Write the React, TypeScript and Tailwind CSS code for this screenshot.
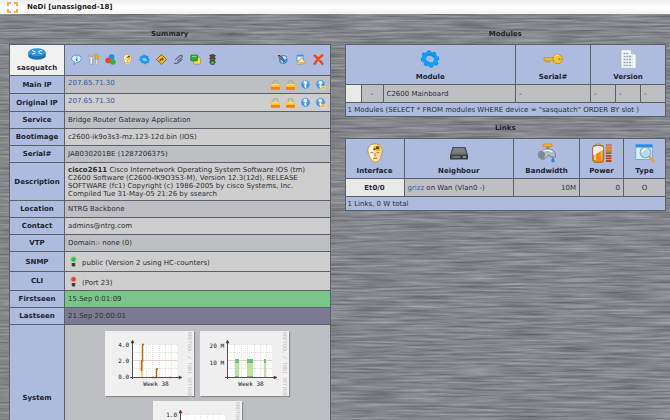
import type { ReactNode } from "react";

type IconProps = { className?: string };
const small = "block size-[11px]";
const large = "mx-auto block size-5";

/* ---------- small tool icons, 16 x 16 grid ---------- */

const Bubble = () => (
  <svg viewBox="0 0 16 16" className={small}>
    <path d="M8 1.500c4 0 7 2.300 7 5.300s-3 5.300-6.500 5.300L4.500 15.500l.6-4C2.500 10.700 1 9 1 6.800 1 3.800 4 1.500 8 1.500z" fill="#dff1ff" stroke="#4a8fd6" strokeWidth="1.400" />
    <path d="M7.500 3.500h1.800v1.500H7.500zM7 6h2.300v4.500H7z" fill="#3a86d8" />
  </svg>
);
const Tools = () => (
  <svg viewBox="0 0 16 16" className={small}>
    <path d="M1 1v4l2 2v8h3.500V7l2-2V1L6.500 2.500v2H3v-2z" fill="#f2f2ee" stroke="#858b91" strokeWidth=".9" />
    <path d="M10.500 1h4.500v7h-4.500z" fill="#f4b41c" stroke="#c88310" strokeWidth=".7" />
    <path d="M11.700 8h2.200v7h-2.200z" fill="#f7f4e8" stroke="#8f8f8f" strokeWidth=".6" />
  </svg>
);
const Balls = () => (
  <svg viewBox="0 0 16 16" className={small}>
    <circle cx="9.500" cy="4.800" r="4.300" fill="#2a8fe0" />
    <circle cx="4.800" cy="9.300" r="4.200" fill="#e34b2a" />
    <circle cx="11.500" cy="11.500" r="4" fill="#2fb53c" />
  </svg>
);
const Face = ({ className = small }: IconProps) => (
  <svg viewBox="0 0 20 20" className={className}>
    <path d="M10 .8c4.500 0 7.300 3 7.300 7 0 2-.8 3.500-1.200 5.200C15.500 16.500 13 19.200 10.500 19.200S5.500 16.800 4.300 13C3.400 11 2.700 9.500 2.700 7.600 2.700 3.800 5.500.8 10 .8z" fill="#f7dfa2" stroke="#b98a3c" strokeWidth=".8" />
    <path d="M9 2C6 2 4 4.500 4 7.500c0 2.500 2 7 4 9z" fill="#fff8e2" />
    <path d="M8.500 3.500h3l1-1.500 3 2v3l-3 1.500-2-1.500-2 .5z" fill="#efad1a" />
    <path d="M11 3.500h3v2.500h-3zM8.500 5.500h2V7h-2z" fill="#5b421b" />
    <path d="M5.500 9.700h3M11.500 9.700h3M8 15.300h4.300M10 10v3h1.300" fill="none" stroke="#ae8035" strokeWidth="1" />
  </svg>
);
const Cog = ({ className = small }: IconProps) => (
  <svg viewBox="0 0 20 20" className={className}>
    <g transform="rotate(25 10 10)">
      <ellipse cx="10" cy="10" rx="8" ry="6.800" fill="none" stroke="#1585dc" strokeWidth="3" strokeDasharray="3.200 2.600" />
      <ellipse cx="10" cy="10" rx="6.200" ry="5.200" fill="none" stroke="#14a0f8" strokeWidth="4.400" />
      <path d="M5.500 8.500a5.500 4.500 0 0 1 8-2.500" fill="none" stroke="#1670bd" strokeWidth=".8" />
    </g>
  </svg>
);
const Sign = () => (
  <svg viewBox="0 0 16 16" className={small}>
    <path d="M8 .8 15.200 8 8 15.200.8 8z" fill="#f8bf22" stroke="#6f5518" strokeWidth="1.200" />
    <path d="M6 11V7.500h4M8.500 5.500l2.300 2-2.300 2" fill="none" stroke="#43310c" strokeWidth="1.300" />
  </svg>
);
const Clip = () => (
  <svg viewBox="0 0 16 16" className={small}>
    <path d="M3 9 10 2.500c2-1.500 4.500.5 3 2.500L6.500 10.500M1.500 13c2 1.500 5 .5 7-1l5-4.500" fill="none" stroke="#59677d" strokeWidth="1.700" />
    <path d="M3 10.500 10.500 4" stroke="#a5b2c6" strokeWidth="1.200" />
  </svg>
);
const Layers = () => (
  <svg viewBox="0 0 16 16" className={small}>
    <rect x="5.500" y="5" width="9.700" height="9.700" rx="1.500" fill="#ffdf55" stroke="#a98b15" />
    <rect x="1" y="1.500" width="10" height="8.500" rx="1.500" fill="#34a83b" stroke="#187a24" />
    <path d="M3 3.500h6" stroke="#8fdd83" strokeWidth="1.500" />
  </svg>
);
const TrafficLight = () => (
  <svg viewBox="0 0 16 16" className={small}>
    <path d="M3 2.500h10M3 7h10M3 11.500h10" stroke="#4c4943" strokeWidth="1.500" />
    <rect x="4.700" y=".5" width="6.600" height="15" rx="1.500" fill="#3d3b38" />
    <circle cx="8" cy="3.300" r="1.700" fill="#8f392a" />
    <circle cx="8" cy="7.700" r="1.700" fill="#83702b" />
    <circle cx="8" cy="12.500" r="2.300" fill="#29cf36" />
  </svg>
);
const GlobeEdit = () => (
  <svg viewBox="0 0 16 16" className={small}>
    <circle cx="9" cy="8" r="6.500" fill="#3f92dc" />
    <path d="M8 3c3-1 5 1 6 3l-3 2zM5 9l4 1-1 3.500z" fill="#d5ecfc" />
    <path d="M1 1.500h3L10.500 9l.5 2.500-2.500-1L2 4z" fill="#4e432d" />
    <path d="M3 3.200 9 9.500" stroke="#efb23f" strokeWidth="1.200" />
  </svg>
);
const Broom = () => (
  <svg viewBox="0 0 16 16" className={small}>
    <path d="M3 1.500h9v9H3z" fill="#e8f4ff" stroke="#3d86cf" />
    <path d="M3 1.500h9v2.200H3z" fill="#3f92dc" />
    <path d="m9.500 5 5.500 7c-1 3-9.500 4-13 2z" fill="#f8e6a5" stroke="#a27a33" strokeWidth=".8" />
    <path d="M5 13h9" stroke="#d99b27" strokeWidth="1.500" />
  </svg>
);
const Cross = () => (
  <svg viewBox="0 0 16 16" className={small}>
    <path d="M2.500 2.500C6 5 10.500 9.500 13.500 14M13.500 2C9 5 5 9.500 2.500 14" fill="none" stroke="#e64a1b" strokeWidth="3.500" strokeLinecap="round" />
  </svg>
);
const Lock = () => (
  <svg viewBox="0 0 16 16" className={small}>
    <path d="M4.500 8V5.500c0-4 7-4 7 0V8" fill="none" stroke="#a7a7a3" strokeWidth="1.900" />
    <rect x="1.500" y="7" width="13" height="8.500" rx="1" fill="#f9c529" />
    <path d="M1.500 11.500h13v3a1 1 0 0 1-1 1h-11a1 1 0 0 1-1-1z" fill="#ee8119" />
    <path d="M3 8.500h10" stroke="#fff0a0" strokeWidth="1.200" />
  </svg>
);
const Globe = ({ badge = false }: { badge?: boolean }) => (
  <svg viewBox="0 0 16 16" className={small}>
    <circle cx="8" cy="8" r="6.800" fill="#4a93dd" stroke="#b3d4f0" strokeWidth="1" />
    <path d="M6 2.500 9.500 3 11 6 9 8l.5 4-2 1.500L6 10l1-2.500L4.500 6z" fill="#e2f3ff" />
    {badge && <path d="M8.500 10.500h7v4.500h-7z" fill="#f6b92d" stroke="#fff3cd" strokeWidth=".8" />}
  </svg>
);
const Bulb = ({ on }: { on: boolean }) => (
  <svg viewBox="0 0 16 16" className={small}>
    <circle cx="8" cy="5.500" r="5" fill="#dedede" stroke="#a7a7a7" strokeWidth=".7" />
    <circle cx="8" cy="5" r="3.500" className={on ? "fill-[#20c239]" : "fill-[#e2481f]"} />
    <path d="M5.500 10h5v4.500L8 15.800l-2.500-1.300z" fill="#3e3e3b" />
  </svg>
);

/* ---------- column icons ---------- */

const Key = () => (
  <svg viewBox="0 0 20 20" className={large}>
    <path d="M1 8.700h11v2.600H6.500V13H5v-1.700H4V13H2.500v-1.700H1z" fill="#f5c02b" stroke="#b47c12" strokeWidth=".6" />
    <ellipse cx="14.700" cy="10" rx="4.600" ry="4.700" fill="#fac823" stroke="#c18614" strokeWidth=".8" />
    <circle cx="16.500" cy="10" r="1.200" fill="#8296bf" />
    <path d="M11.500 8c1-2 3-2.300 4.500-1.800" fill="none" stroke="#fff0a3" />
  </svg>
);
const Sheet = () => (
  <svg viewBox="0 0 20 20" className={large}>
    <path d="M3 .8h10.500L18 5v14.300H3z" fill="#f6fafd" stroke="#a5b7c5" strokeWidth=".8" />
    <path d="M13.500.8V5H18z" fill="#c4d4e0" stroke="#8fa3b3" strokeWidth=".5" />
    <path d="M5.500 4.500h5M5.500 7.500h9M5.500 10.500h9M5.500 13.500h9M5.500 16.500h9" stroke="#93a4ae" strokeWidth="1.300" strokeDasharray="2 .8" />
  </svg>
);
const Box = () => (
  <svg viewBox="0 0 20 20" className={large}>
    <path d="M3.500 4h13l2.500 8v4.500H1V12z" fill="#3e4144" />
    <path d="M4.200 4.700h11.600l2.200 6.800H2z" fill="#72777b" />
    <path d="M5 6h10M4.500 8h11" stroke="#8e9396" strokeWidth=".8" />
    <path d="M3 14h8" stroke="#9ba0a3" />
    <path d="M14 14h3" stroke="#d5dadd" />
  </svg>
);
const Tap = () => (
  <svg viewBox="0 0 20 20" className={large}>
    <path d="M6 1h9v2.800H6z" fill="#f3b521" stroke="#b8790e" strokeWidth=".5" />
    <path d="M9 3.500h3.500V7H9z" fill="#858c93" />
    <path d="M1.500 9.500c1-1.500 3-.5 4-1.500 2-2.500 8-2.500 11 0 2 1.500 2.300 3.500 2 6h-5c0-1.500-1-2-2.500-1.500-2 3-4.500 4.500-7 3.500S1 11.500 1.500 9.500z" fill="#b3bac0" stroke="#626c75" strokeWidth=".7" />
    <path d="M6 8.500c3-2 7-1.500 9.500.5" fill="none" stroke="#f5f8fa" strokeWidth="1.500" />
    <ellipse cx="5" cy="12" rx="3" ry="3.700" fill="#7f8993" />
    <path d="M16 14c2 2.500 2.300 5.500 0 5.500s-2-3 0-5.500z" fill="#2689e0" />
  </svg>
);
const Battery = () => (
  <svg viewBox="0 0 20 20" className={large}>
    <path d="M3.500 1h5v2h-5z" fill="#c8c8c2" stroke="#777" strokeWidth=".5" />
    <rect x=".7" y="2.300" width="11" height="17" rx="2.500" fill="#f28b1c" stroke="#8d5a22" strokeWidth=".8" />
    <path d="M1.200 4.500c2.500-2 7.500-2 10 0V7L4 11l-2.800 1z" fill="#ecebe4" />
    <path d="M9.500 8v9" stroke="#ffbe48" strokeWidth="1.500" />
    <path d="M3 5v12" stroke="#fff" strokeWidth="1.300" opacity=".8" />
    <path d="M16.700 1.500V19" stroke="#b94719" strokeWidth="5.500" strokeDasharray="1.800 .8" />
    <path d="M16.700 1.500v8" stroke="#d98522" strokeWidth="5.500" strokeDasharray="1.800 .8" />
  </svg>
);
const Search = () => (
  <svg viewBox="0 0 20 20" className={large}>
    <path d="M.8 1.500h16.500v15H.8z" fill="#d9edfc" stroke="#61a6df" strokeWidth=".8" />
    <path d="M.8 1.500h16.500v3H.8z" fill="#278ce5" />
    <path d="m14 13.500 5 5" stroke="#e8a340" strokeWidth="2.600" strokeLinecap="round" />
    <circle cx="10.500" cy="9.500" r="5.300" fill="#b9dbf3" stroke="#8fa9bd" strokeWidth="1.100" />
    <path d="M7 9c.5-2 2-3 4-2.800" fill="none" stroke="#fff" strokeWidth="1.300" />
  </svg>
);
const Router = () => (
  <svg viewBox="0 0 18 12" className="mx-auto block h-3 w-[18px]">
    <path d="M.3 4v4c0 2 4 3.700 8.700 3.700S17.700 10 17.700 8V4z" fill="#1b74b8" />
    <ellipse cx="9" cy="4.200" rx="8.700" ry="3.900" fill="#2d9bdc" />
    <path d="m4 2.500 3.500 1.300M14 6l-3.500-1.500M10.500 3.500 14 2.300M7.500 5 4 6.200" stroke="#e5f5ff" strokeWidth="1" />
  </svg>
);

/* ---------- page furniture ---------- */

const BrushedMetal = () => (
  <svg aria-hidden="true" className="absolute inset-0 -z-10 size-full">
    <filter id="brushed" x="0" y="0" width="100%" height="100%" colorInterpolationFilters="sRGB">
      <feTurbulence type="fractalNoise" baseFrequency="0.02 0.5" numOctaves="3" seed="8" />
      <feColorMatrix values=".32 0 0 0 .35  .32 0 0 0 .36  .32 0 0 0 .38  0 0 0 0 1" />
    </filter>
    <rect width="100%" height="100%" filter="url(#brushed)" />
  </svg>
);

const border = "border border-[#5c6068]";
const head = `${border} bg-[#adbbdf] p-0 text-center font-bold text-[#20242c]`;
const light = "bg-[#cecece]";
const dark = "bg-[#bebfc3]";

function Tool({ label, children }: { label: string; children: ReactNode }) {
  return (
    <a href="#" aria-label={label} className="block">
      {children}
    </a>
  );
}

function Row({ label, height = "h-[17px]", tone, children }: { label: string; height?: string; tone: string; children: ReactNode }) {
  return (
    <tr className={height}>
      <th scope="row" className={head}>{label}</th>
      <td className={`${border} ${tone} px-[3px] py-0`}>{children}</td>
    </tr>
  );
}

function Address() {
  return (
    <div className="flex items-start justify-between">
      <a href="#" className="text-[#2a5caa]">207.65.71.30</a>
      <span className="flex gap-1 pr-px">
        <Tool label="Telnet"><Lock /></Tool>
        <Tool label="Secure shell"><Lock /></Tool>
        <Tool label="Web"><Globe /></Tool>
        <Tool label="Secure web"><Globe badge /></Tool>
      </span>
    </div>
  );
}

function Graph({ ticks, origin, children }: { ticks: { y: number; text: string }[]; origin: number; children?: ReactNode }) {
  return (
    <svg viewBox="0 0 89 65" className="block h-[65px] w-[89px] overflow-visible bg-[#f0f0f0] font-['DejaVu_Sans_Mono',monospace] text-[6px] shadow-[1px_1px_1px_#88898d]">
      <path d={`M${origin} 13h${72 - origin}v33h-${72 - origin}z`} fill="#fff" />
      <path d={`M${origin} 13.500H72M${origin} 21.500H72M${origin} 29.500H72M${origin} 37.500H72M34.500 13v33M41.500 13v33M47.500 13v33M54.500 13v33M60.500 13v33M66.500 13v33`} stroke="#e5dedd" strokeWidth="1" strokeDasharray="1 1" />
      <path d={`M${origin} 29.500H72`} stroke="#e8d0c4" strokeWidth="1" />
      {children}
      <path d={`M${origin + 0.5} 11v37M${origin - 2} 46.500H75`} stroke="#55504e" strokeWidth="1" />
      <path d={`m${origin - 1} 12 1.500-3 1.500 3zM74 45l3 1.500-3 1.500z`} fill="#60301c" stroke="#60301c" strokeWidth=".5" />
      {ticks.map((t) => (
        <text key={t.text} x={origin - 3} y={t.y} textAnchor="end" fill="#222">{t.text}</text>
      ))}
      <text x="51" y="55" textAnchor="middle" fill="#222">Week 38</text>
      <text transform="translate(83 1) rotate(90)" fill="#bdbdbd" className="text-[5px]">RRDTOOL / TOBI OETIKER</text>
    </svg>
  );
}

const Title = ({ children }: { children: ReactNode }) => (
  <h2 className="text-center font-bold text-[#22252b]">{children}</h2>
);

function ColumnHead({ label, span, children }: { label: string; span?: number; children: ReactNode }) {
  return (
    <th scope="col" colSpan={span} className={head}>
      <div className="flex flex-col gap-1">
        {children}
        <span>{label}</span>
      </div>
    </th>
  );
}

const tableStyle = "w-full table-fixed border-collapse";

function Summary() {
  return (
    <section className="min-w-0 flex-1">
      <Title>Summary</Title>
      <table className={`${tableStyle} mt-1.5`}>
        <colgroup>
          <col className="w-[55px]" />
          <col />
        </colgroup>
        <tbody>
          <tr className="h-[31px]">
            <th scope="row" className={`${border} bg-[#f1f1f1] p-0 text-center font-bold`}>
              <Router />
              <span className="mt-1 block">sasquatch</span>
            </th>
            <td className={`${border} bg-[#adbbdf] px-1.5 pt-0 pb-0.5`}>
              <div className="flex justify-between">
                <span className="flex gap-1.5">
                  <Tool label="Info"><Bubble /></Tool>
                  <Tool label="Configuration"><Tools /></Tool>
                  <Tool label="Networks"><Balls /></Tool>
                  <Tool label="Interfaces"><Face /></Tool>
                  <Tool label="Modules"><Cog /></Tool>
                  <Tool label="Routes"><Sign /></Tool>
                  <Tool label="Links"><Clip /></Tool>
                  <Tool label="Vlans"><Layers /></Tool>
                  <Tool label="Monitoring"><TrafficLight /></Tool>
                </span>
                <span className="flex gap-[7px]">
                  <Tool label="Edit"><GlobeEdit /></Tool>
                  <Tool label="Clear"><Broom /></Tool>
                  <Tool label="Delete"><Cross /></Tool>
                </span>
              </div>
            </td>
          </tr>
          <Row label="Main IP" height="h-[18px]" tone={dark}><Address /></Row>
          <Row label="Original IP" height="h-[18px]" tone={light}><Address /></Row>
          <Row label="Service" tone={dark}>Bridge Router Gateway Application</Row>
          <Row label="Bootimage" tone={light}>c2600-ik9o3s3-mz.123-12d.bin (IOS)</Row>
          <Row label="Serial#" tone={dark}>JAB030201BE (1287206375)</Row>
          <Row label="Description" height="h-[38px]" tone={light}>
            <b>cisco2611</b> Cisco Internetwork Operating System Software IOS (tm)<br />
            C2600 Software (C2600-IK9O3S3-M), Version 12.3(12d), RELEASE<br />
            SOFTWARE (fc1) Copyright (c) 1986-2005 by cisco Systems, Inc.<br />
            Compiled Tue 31-May-05 21:26 by ssearch
          </Row>
          <Row label="Location" tone={dark}>NTRG Backbone</Row>
          <Row label="Contact" tone={light}>admins@ntrg.com</Row>
          <Row label="VTP" tone={dark}>Domain:- none (0)</Row>
          <Row label="SNMP" height="h-5" tone={light}>
            <div className="flex items-end gap-[3px]"><Bulb on />public (Version 2 using HC-counters)</div>
          </Row>
          <Row label="CLI" height="h-[19px]" tone={light}>
            <div className="flex items-end gap-[3px]"><Bulb on={false} />(Port 23)</div>
          </Row>
          <Row label="Firstseen" tone="bg-[#7bc58b]">15.Sep 0:01:09</Row>
          <Row label="Lastseen" tone="bg-[#7b7a91]">21.Sep 20:00:01</Row>
          <Row label="System" height="h-[147px]" tone={dark}>
            <div className="mx-auto flex max-w-[200px] flex-wrap justify-center gap-x-1.5 gap-y-[5px]">
              <Graph origin={27} ticks={[{ y: 16, text: "4.0" }, { y: 32, text: "2.0" }, { y: 48, text: "0.0" }]}>
                <path d="M36 31h2v15h-2z" fill="#ffca6b" />
                <path d="M36.500 40V30h1V13.500H39M47 46.500h4.500v-8.500H53M64 46.500h2" fill="none" stroke="#bd6714" strokeWidth="1.500" />
              </Graph>
              <Graph origin={27} ticks={[{ y: 17, text: "20 M" }, { y: 34, text: "10 M" }]}>
                <path d="M35 28h4v18h-4zM47 28h6v18h-6zM64 28h2v18h-2z" fill="#bbe4a0" />
                <path d="M35 28h4v4h-4zM47 28h6v4h-6zM64 28h2v4h-2zM35 45h4v1h-4zM47 45h6v1h-6z" fill="#70bd7e" />
              </Graph>
              <Graph origin={27} ticks={[{ y: 16, text: "1.0" }, { y: 48, text: "0.0" }]} />
            </div>
          </Row>
        </tbody>
      </table>
    </section>
  );
}

function Modules() {
  return (
    <section>
      <Title>Modules</Title>
      <table className={`${tableStyle} mt-1.5`}>
        <colgroup>
          <col className="w-4" />
          <col className="w-[22px]" />
          <col />
          <col className="w-[75px]" />
          <col className="w-[25px]" />
          <col className="w-[25px]" />
          <col className="w-[25px]" />
        </colgroup>
        <thead>
          <tr className="h-10">
            <ColumnHead label="Module" span={3}><Cog className={large} /></ColumnHead>
            <ColumnHead label="Serial#"><Key /></ColumnHead>
            <ColumnHead label="Version" span={3}><Sheet /></ColumnHead>
          </tr>
        </thead>
        <tbody>
          <tr className="h-[18px]">
            <td className={`${border} bg-[#e9e9e9]`} />
            <td className={`${border} ${dark} p-0 text-center`}>-</td>
            <td className={`${border} ${dark} px-[3px] py-0`}>C2600 Mainboard</td>
            <td className={`${border} ${dark} px-[3px] py-0`}>-</td>
            <td className={`${border} ${dark} px-[3px] py-0`}>-</td>
            <td className={`${border} ${dark} px-[3px] py-0`}>-</td>
            <td className={`${border} ${dark} px-[3px] py-0`}>-</td>
          </tr>
          <tr className="h-[14px]">
            <td colSpan={7} className={`${border} bg-[#adbbdf] px-0.5 py-0`}>
              1 Modules (SELECT * FROM modules WHERE device = "sasquatch" ORDER BY slot )
            </td>
          </tr>
        </tbody>
      </table>
    </section>
  );
}

function Links() {
  return (
    <section>
      <Title>Links</Title>
      <table className={`${tableStyle} mt-1.5`}>
        <colgroup>
          <col className="w-[59px]" />
          <col />
          <col className="w-[66px]" />
          <col className="w-11" />
          <col className="w-[42px]" />
        </colgroup>
        <thead>
          <tr className="h-10">
            <ColumnHead label="Interface"><Face className={large} /></ColumnHead>
            <ColumnHead label="Neighbour"><Box /></ColumnHead>
            <ColumnHead label="Bandwidth"><Tap /></ColumnHead>
            <ColumnHead label="Power"><Battery /></ColumnHead>
            <ColumnHead label="Type"><Search /></ColumnHead>
          </tr>
        </thead>
        <tbody>
          <tr className="h-[18px]">
            <th scope="row" className={`${border} bg-[#e9e9e9] p-0 text-center font-bold`}>Et0/0</th>
            <td className={`${border} ${dark} px-[3px] py-0`}>
              <a href="#" className="text-[#2a5caa]">grizz</a> on Wan (Vlan0 -)
            </td>
            <td className={`${border} ${dark} px-[3px] py-0 text-right`}>10M</td>
            <td className={`${border} ${dark} px-[3px] py-0 text-right`}>0</td>
            <td className={`${border} ${dark} p-0 text-center`}>O</td>
          </tr>
          <tr className="h-[14px]">
            <td colSpan={5} className={`${border} bg-[#adbbdf] px-0.5 py-0`}>1 Links, 0 W total</td>
          </tr>
        </tbody>
      </table>
    </section>
  );
}

export default function App() {
  return (
    <div className="relative isolate min-h-screen overflow-hidden bg-[#85878d] font-['DejaVu_Sans',Verdana,sans-serif] text-[7px] leading-[8px] text-[#2c2e33]">
      <BrushedMetal />
      <header className="flex h-[14px] items-center gap-[9px] bg-linear-to-b from-[#ececea] via-white to-[#f3f3f1] pl-[7px]">
        <svg viewBox="0 0 11 11" className="size-[11px]">
          <path d="M1 4V1h3M7 1h3v3M10 7v3H7M4 10H1V7" fill="none" stroke="#f3a12b" strokeWidth="1.700" />
        </svg>
        <h1 className="font-bold text-[#222]">NeDi [unassigned-18]</h1>
      </header>
      <main className="flex gap-[14px] pt-4 pr-1 pl-[9px]">
        <Summary />
        <div className="flex min-w-0 flex-1 flex-col gap-[7px]">
          <Modules />
          <Links />
        </div>
      </main>
    </div>
  );
}
